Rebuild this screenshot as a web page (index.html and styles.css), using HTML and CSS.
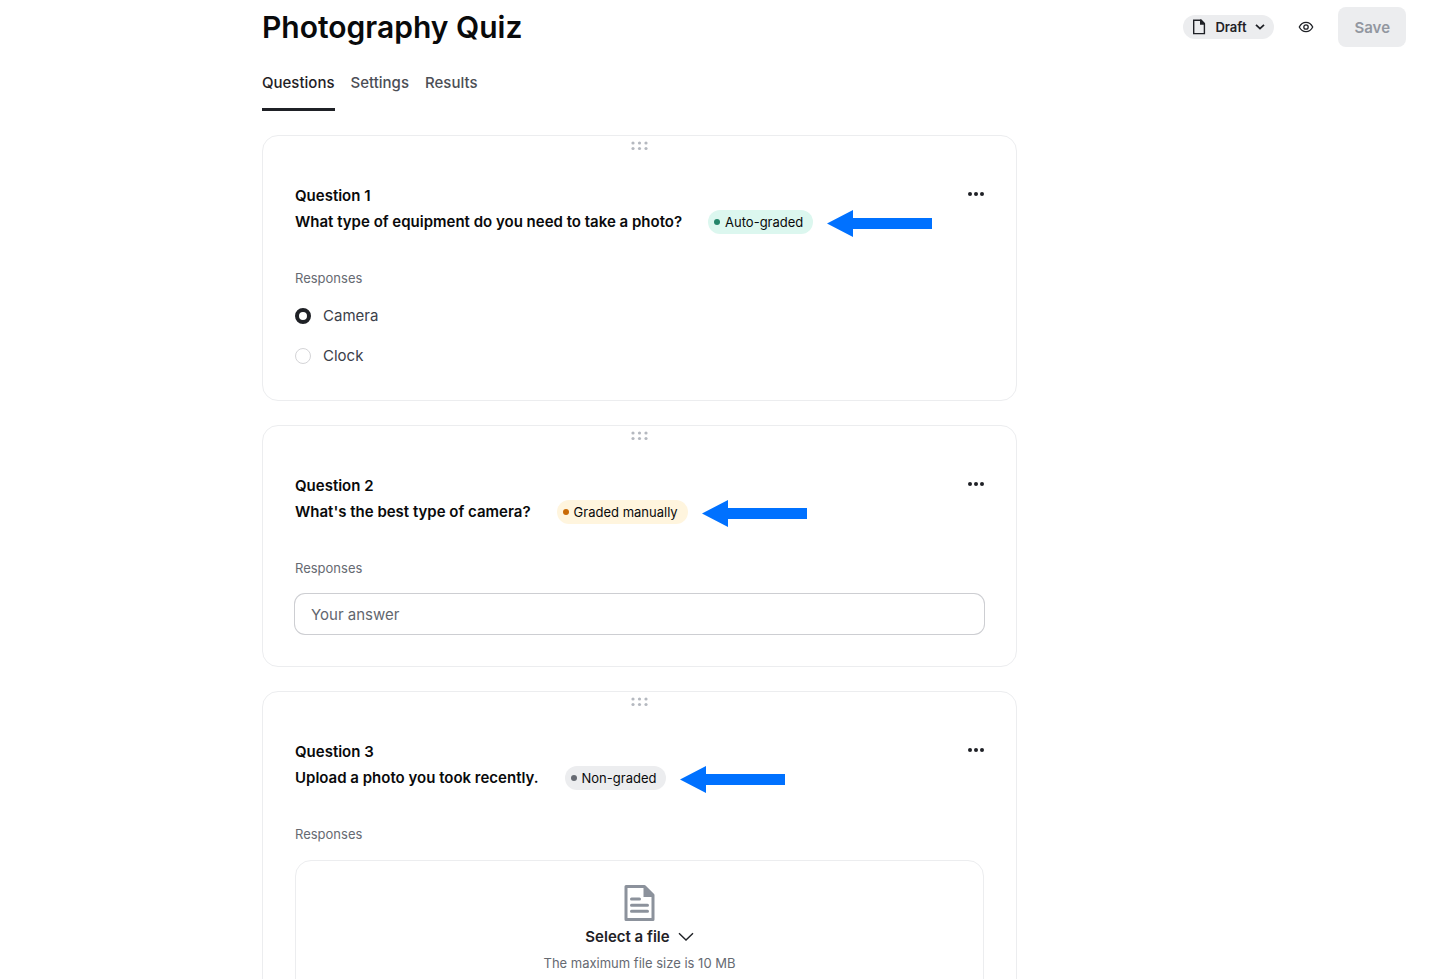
FILE: index.html
```html
<!DOCTYPE html>
<html lang="en">
<head>
<meta charset="utf-8">
<meta name="viewport" content="width=device-width, initial-scale=1">
<title>Photography Quiz</title>
<link rel="stylesheet" href="styles.css">
</head>
<body>
<svg class="sprite" aria-hidden="true">
  <symbol id="grip" viewBox="0 0 18 10">
    <circle cx="2" cy="2" r="1.6"/><circle cx="8.5" cy="2" r="1.6"/><circle cx="15" cy="2" r="1.6"/>
    <circle cx="2" cy="7.5" r="1.6"/><circle cx="8.5" cy="7.5" r="1.6"/><circle cx="15" cy="7.5" r="1.6"/>
  </symbol>
  <symbol id="more" viewBox="0 0 16 16">
    <circle cx="2" cy="8" r="2"/><circle cx="8" cy="8" r="2"/><circle cx="14" cy="8" r="2"/>
  </symbol>
  <symbol id="arrow" viewBox="0 0 105 27">
    <path d="M0 13.5 26 0v8h79v11H26v8z"/>
  </symbol>
</svg>
<div class="page">
  <header class="topbar">
    <h1 class="title">Photography Quiz</h1>
    <div class="actions">
      <button class="status" type="button">
        <svg width="14" height="16" viewBox="0 0 14 16"><path d="M1.7 1.2H9L12.4 4.6V14.6H1.7z" fill="none" stroke="currentColor" stroke-width="1.4"/><path d="M8 .6H9.3L13 4.4V5.8H8z" fill="currentColor"/></svg>
        <span>Draft</span>
        <svg width="10" height="8" viewBox="0 0 10 8"><path d="M1 1.8 5 5.6 9 1.8" fill="none" stroke="currentColor" stroke-width="1.8"/></svg>
      </button>
      <button class="icon-button" type="button" aria-label="Preview">
        <svg width="16" height="12" viewBox="0 0 16 12" fill="none" stroke="currentColor" stroke-width="1.3"><path d="M1.3 6C2.8 3 5.2 1.3 8 1.3S13.2 3 14.7 6C13.2 9 10.8 10.7 8 10.7S2.8 9 1.3 6z"/><circle cx="8" cy="6" r="2.2"/></svg>
      </button>
      <button class="save" type="button" disabled>Save</button>
    </div>
  </header>

  <nav class="tabs">
    <a class="tab tab-active" href="#questions" aria-current="page">Questions</a>
    <a class="tab" href="#settings">Settings</a>
    <a class="tab" href="#results">Results</a>
  </nav>

  <main class="questions" id="questions">
    <section class="card">
      <button class="grip" type="button" aria-label="Reorder question 1"><svg width="18" height="10"><use href="#grip"/></svg></button>
      <div class="card-head">
        <div>
          <p class="number">Question 1</p>
          <div class="prompt-row">
            <h2 class="prompt">What type of equipment do you need to take a photo?</h2>
            <span class="badge badge-auto">Auto-graded</span>
            <svg class="arrow" width="105" height="27"><use href="#arrow"/></svg>
          </div>
        </div>
        <button class="more" type="button" aria-label="Question 1 options"><svg width="16" height="16"><use href="#more"/></svg></button>
      </div>
      <p class="label">Responses</p>
      <div class="choices">
        <label class="choice"><input class="radio" type="radio" name="equipment" checked>Camera</label>
        <label class="choice"><input class="radio" type="radio" name="equipment">Clock</label>
      </div>
    </section>

    <section class="card">
      <button class="grip" type="button" aria-label="Reorder question 2"><svg width="18" height="10"><use href="#grip"/></svg></button>
      <div class="card-head">
        <div>
          <p class="number">Question 2</p>
          <div class="prompt-row">
            <h2 class="prompt">What's the best type of camera?</h2>
            <span class="badge badge-manual">Graded manually</span>
            <svg class="arrow" width="105" height="27"><use href="#arrow"/></svg>
          </div>
        </div>
        <button class="more" type="button" aria-label="Question 2 options"><svg width="16" height="16"><use href="#more"/></svg></button>
      </div>
      <label class="label" for="answer">Responses</label>
      <input class="answer" id="answer" type="text" placeholder="Your answer">
    </section>

    <section class="card">
      <button class="grip" type="button" aria-label="Reorder question 3"><svg width="18" height="10"><use href="#grip"/></svg></button>
      <div class="card-head">
        <div>
          <p class="number">Question 3</p>
          <div class="prompt-row">
            <h2 class="prompt">Upload a photo you took recently.</h2>
            <span class="badge badge-none">Non-graded</span>
            <svg class="arrow" width="105" height="27"><use href="#arrow"/></svg>
          </div>
        </div>
        <button class="more" type="button" aria-label="Question 3 options"><svg width="16" height="16"><use href="#more"/></svg></button>
      </div>
      <p class="label">Responses</p>
      <div class="upload">
        <svg width="32" height="38" viewBox="0 0 32 38" fill="none" stroke="#8c929c"><path d="M2 2.5H20.500L29 11V35.500H2z" stroke-width="3" stroke-linejoin="round"/><path d="M19.500 2H21L29.500 10.500V13H19.500z" fill="#8c929c" stroke="none"/><path d="M7.500 15H15.500M7.500 21.200H23.500M7.500 27.200H23.500" stroke-width="3" stroke-linecap="round"/></svg>
        <button class="select-file" type="button">Select a file
          <svg width="16" height="10" viewBox="0 0 16 10"><path d="M1 1.200 8 8 15 1.200" fill="none" stroke="currentColor" stroke-width="1.400"/></svg>
        </button>
        <p class="hint">The maximum file size is 10 MB</p>
      </div>
    </section>
  </main>
</div>
</body>
</html>
```
FILE: styles.css
```css
* { box-sizing: border-box; }
body {
  margin: 0;
  background: #fff;
  color: #090a0b;
  font-family: Inter, "Liberation Sans", sans-serif;
  font-size: 15px;
}
h1, h2, p { margin: 0; }
button { border: 0; padding: 0; background: none; color: inherit; font: inherit; cursor: pointer; }
svg { display: block; flex: none; }
.sprite { position: absolute; width: 0; height: 0; }

.page {
  height: 100vh;
  overflow: auto;
  scrollbar-width: none;
  padding: 7px 39px 32px 262px;
}
.topbar { display: flex; align-items: center; justify-content: space-between; height: 40px; }
.title { font-size: 30px; line-height: 40px; font-weight: 600; }
.actions { display: flex; align-items: center; gap: 24px; color: #1f2126; }
.status {
  display: flex;
  align-items: center;
  gap: 9px;
  height: 24px;
  padding: 0 9px;
  border-radius: 12px;
  background: #ecedef;
  font-size: 13px;
  font-weight: 600;
}
.save {
  height: 40px;
  padding: 0 16px;
  border-radius: 8px;
  background: #ecedef;
  color: #9297a0;
  font-weight: 600;
}

.tabs { display: flex; gap: 16px; margin-top: 20px; }
.tab {
  height: 44px;
  border-bottom: 3px solid transparent;
  color: #4b4e55;
  line-height: 32px;
  font-weight: 500;
  text-decoration: none;
}
.tab-active { border-color: #1f2126; color: #1f2126; }

.questions { display: grid; gap: 24px; max-width: 755px; margin-top: 24px; }
.card {
  padding: 0 32px 32px;
  border: 1px solid #ecedef;
  border-radius: 16px;
}
.grip { display: block; margin: 0 auto; padding: 5px 0; fill: #b5b9c0; cursor: grab; }
.card-head { display: flex; justify-content: space-between; margin-top: 27px; }
.number, .prompt { font-size: 15px; line-height: 26px; font-weight: 600; }
.prompt-row { display: flex; align-items: center; height: 26px; }
.badge {
  display: flex;
  align-items: center;
  gap: 5px;
  height: 24px;
  margin: 0 14px 0 26px;
  padding: 0 10px 0 6px;
  border-radius: 12px;
  font-size: 13px;
}
.badge::before { content: ""; width: 6px; height: 6px; border-radius: 50%; background: #24856a; }
.badge-auto { background: #dcf7ef; }
.badge-manual { background: #fff5de; }
.badge-manual::before { background: #c96a05; }
.badge-none { background: #ecedef; }
.badge-none::before { background: #666a72; }
.arrow { align-self: flex-start; margin-top: 1px; fill: #0071ff; }
.more { align-self: flex-start; padding: 3px 0; fill: #1f2126; }

.label { display: block; margin: 33px 0 16px; color: #666a72; font-size: 13px; line-height: 20px; }
.choices { display: grid; gap: 16px; }
.choice { display: flex; align-items: center; gap: 12px; color: #3b4049; line-height: 24px; }
.radio {
  appearance: none;
  width: 16px;
  height: 16px;
  margin: 0;
  border: 1px solid #d4d4d7;
  border-radius: 50%;
  background: #fff;
}
.radio:checked { border: 4px solid #1f2126; }
.answer {
  display: block;
  width: 100%;
  height: 40px;
  padding: 0 16px;
  border: 0;
  border-radius: 10px;
  box-shadow: 0 0 0 1px #cdced2;
  color: #3b4049;
  font: inherit;
}
.answer::placeholder { color: #62666e; }
.upload {
  display: flex;
  flex-direction: column;
  align-items: center;
  padding: 23px 24px 24px;
  border: 1px solid #ecedef;
  border-radius: 16px;
}
.select-file {
  display: flex;
  align-items: center;
  gap: 8px;
  margin-top: 2px;
  color: #1f2126;
  line-height: 26px;
  font-weight: 600;
}
.hint { margin-top: 3px; color: #666a72; font-size: 13px; line-height: 20px; }
```
